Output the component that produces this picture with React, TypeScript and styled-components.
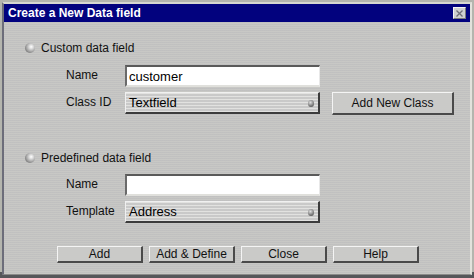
import React from 'react';
import styled, { createGlobalStyle } from 'styled-components';

const GlobalStyle = createGlobalStyle`
  html, body {
    margin: 0;
    padding: 0;
    background: #a8a9b0;
  }
  body {
    font-family: "Liberation Sans", Arial, sans-serif;
  }
`;

const Screen = styled.div`
  width: 474px;
  height: 278px;
  overflow: hidden;
  background: linear-gradient(to bottom, #b4b5ae 0, #b4b5ae 272px, #55565a 272px);
`;

const Window = styled.div`
  display: flex;
  flex-direction: column;
  margin: 2px 2px 0 2px;
  width: 466px;
  height: 270px;
  border-top: 2px solid #d6d7d0;
  border-left: 2px solid #6c6d7a;
  border-right: 2px solid #e2e2dc;
  border-bottom: 1px solid #8a8a8a;
  background-color: #c3c3c1;
  background-image: repeating-linear-gradient(
    0deg,
    rgba(255, 255, 240, 0.08) 0,
    rgba(255, 255, 240, 0.08) 1px,
    rgba(160, 160, 190, 0.08) 1px,
    rgba(160, 160, 190, 0.08) 2px
  );
`;

const TitleBar = styled.div`
  display: flex;
  align-items: center;
  justify-content: space-between;
  height: 18px;
  padding: 0 4px 0 4px;
  background: #02027e;
  color: #ffffff;
  font-size: 12px;
  font-weight: bold;
`;

const CloseButton = styled.div`
  display: flex;
  align-items: center;
  justify-content: center;
  width: 11px;
  height: 10px;
  background: #cfd0d0;
  border-top: 1px solid #f4f4f4;
  border-left: 1px solid #f4f4f4;
  border-right: 1px solid #7a7a7a;
  border-bottom: 1px solid #7a7a7a;
`;

const Body = styled.div`
  display: flex;
  flex-direction: column;
  padding: 19px 0 0 21px;
`;

const RadioRow = styled.div<{ $top?: number }>`
  display: flex;
  align-items: center;
  gap: 6px;
  height: 14px;
  margin-top: ${({ $top }) => $top ?? 0}px;
  color: #111;
  font-size: 12px;
`;

const Radio = styled.span`
  width: 10px;
  height: 10px;
  border-radius: 50%;
  background: radial-gradient(circle at 62% 38%, #ffffff 0, #d8d8d8 25%, #9a9a9a 60%, #4a4a4a 100%);
`;

const FieldGrid = styled.div<{ $top: number }>`
  display: grid;
  grid-template-columns: 59px 195px auto;
  grid-auto-rows: 22px;
  row-gap: 5px;
  margin: ${({ $top }) => $top}px 0 0 41px;
  align-items: center;
`;

const Label = styled.span`
  font-size: 12px;
  color: #111;
  padding-bottom: 2px;
`;

const TextBox = styled.div`
  box-sizing: border-box;
  height: 22px;
  display: flex;
  align-items: center;
  padding-left: 2px;
  background: #ffffff;
  border-top: 2px solid #5a5a5a;
  border-left: 2px solid #6a6a6a;
  border-right: 1px solid #e8e8e8;
  border-bottom: 2px solid #e0e0dc;
  font-size: 13px;
  color: #000;
`;

const Select = styled.div`
  box-sizing: border-box;
  position: relative;
  height: 22px;
  display: flex;
  align-items: center;
  padding-left: 3px;
  background-color: #d2d2d0;
  background-image: repeating-linear-gradient(
    0deg,
    rgba(255, 255, 255, 0.35) 0,
    rgba(255, 255, 255, 0.35) 1px,
    rgba(150, 150, 160, 0.15) 1px,
    rgba(150, 150, 160, 0.15) 3px
  );
  border-top: 1px solid #f0f0f0;
  border-left: 1px solid #f0f0f0;
  border-right: 2px solid #3c3c3c;
  border-bottom: 2px solid #3c3c3c;
  font-size: 13px;
  color: #000;
`;

const Knob = styled.span`
  position: absolute;
  right: 4px;
  top: 7px;
  width: 6px;
  height: 7px;
  border-radius: 50%;
  background: radial-gradient(circle at 40% 35%, #e0e0e0 0, #8a8a8a 50%, #3a3a3a 100%);
`;

const Button = styled.button<{ $width?: number; $height?: number }>`
  box-sizing: border-box;
  width: ${({ $width }) => $width ?? 86}px;
  height: ${({ $height }) => $height ?? 17}px;
  padding: 0;
  margin: 0;
  background: #cacac8;
  border-top: 1px solid #f4f4f4;
  border-left: 1px solid #f4f4f4;
  border-right: 2px solid #4a4a4a;
  border-bottom: 2px solid #4a4a4a;
  font-family: "Liberation Sans", Arial, sans-serif;
  font-size: 12px;
  color: #111;
`;

const SideButton = styled(Button)`
  margin-left: 12px;
`;

const ButtonRow = styled.div`
  display: flex;
  gap: 6px;
  margin: 23px 0 0 32px;
`;

const CloseIcon = () => (
  <svg width="7" height="7" viewBox="0 0 7 7">
    <path d="M0.5 0.5 L6.5 6.5 M6.5 0.5 L0.5 6.5" stroke="#6e6e78" strokeWidth="1.3" />
  </svg>
);

export default function App() {
  return (
    <>
      <GlobalStyle />
      <Screen>
        <Window>
          <TitleBar>
            <span>Create a New Data field</span>
            <CloseButton>
              <CloseIcon />
            </CloseButton>
          </TitleBar>
          <Body>
            <RadioRow>
              <Radio />
              Custom data field
            </RadioRow>
            <FieldGrid $top={10}>
              <Label>Name</Label>
              <TextBox>customer</TextBox>
              <span />
              <Label>Class ID</Label>
              <Select>
                Textfield
                <Knob />
              </Select>
              <SideButton $width={122} $height={23}>Add New Class</SideButton>
            </FieldGrid>

            <RadioRow $top={37}>
              <Radio />
              Predefined data field
            </RadioRow>
            <FieldGrid $top={9}>
              <Label>Name</Label>
              <TextBox />
              <span />
              <Label>Template</Label>
              <Select>
                Address
                <Knob />
              </Select>
              <span />
            </FieldGrid>

            <ButtonRow>
              <Button>Add</Button>
              <Button>Add &amp; Define</Button>
              <Button>Close</Button>
              <Button>Help</Button>
            </ButtonRow>
          </Body>
        </Window>
      </Screen>
    </>
  );
}
